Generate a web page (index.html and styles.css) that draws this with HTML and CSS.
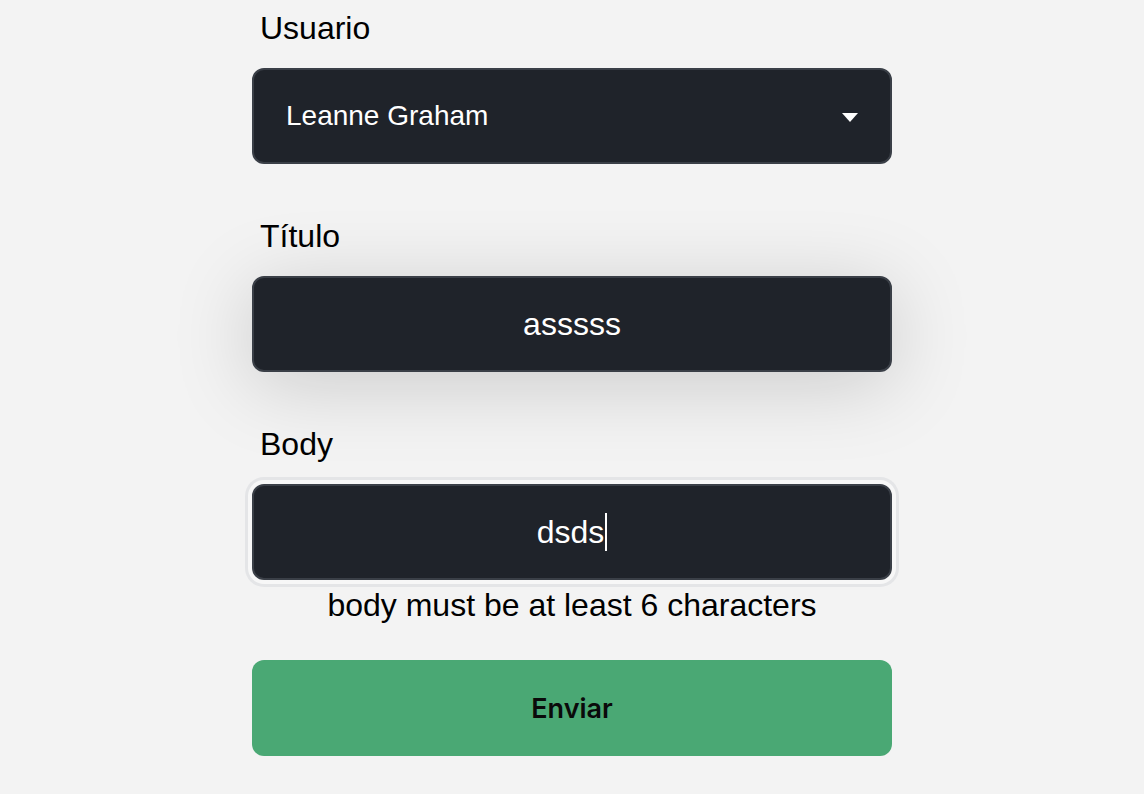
FILE: index.html
```html
<!DOCTYPE html>
<html lang="es">
<head>
<meta charset="utf-8">
<title>Formulario</title>
<link rel="stylesheet" href="styles.css">
</head>
<body>
<form class="form">
  <div class="field">
    <label class="label">Usuario</label>
    <div class="control select">
      <span>Leanne Graham</span>
      <svg class="arrow" width="16" height="9" viewBox="0 0 16 9"><path d="M0 0H16L8 9Z" fill="#fff"/></svg>
    </div>
  </div>
  <div class="field">
    <label class="label">Título</label>
    <div class="control text hovered">asssss</div>
  </div>
  <div class="field last">
    <label class="label">Body</label>
    <div class="control text focused">dsds<span class="caret"></span></div>
    <p class="error">body must be at least 6 characters</p>
  </div>
  <button type="button" class="submit">Enviar</button>
</form>
</body>
</html>
```

FILE: styles.css
```css
html, body {
  margin: 0;
  padding: 0;
}
body {
  background: #f3f3f3;
  font-family: "Liberation Sans", Arial, sans-serif;
  color: #000;
  min-height: 794px;
}
.form {
  width: 640px;
  margin: 0 auto;
  padding-top: 11px;
  display: flex;
  flex-direction: column;
}
.field {
  display: flex;
  flex-direction: column;
  margin-bottom: 55px;
}
.field.last {
  margin-bottom: 38px;
}
.label {
  font-size: 32px;
  line-height: 34px;
  padding-left: 8px;
  margin-bottom: 23px;
}
.control {
  box-sizing: border-box;
  height: 96px;
  border: 2px solid #3a3f47;
  border-radius: 12px;
  background: #1f232a;
  color: #fff;
  font-size: 28px;
  display: flex;
  align-items: center;
}
.select {
  justify-content: space-between;
  padding: 0 32px;
}
.arrow {
  margin-top: 2px;
}
.text {
  justify-content: center;
  font-size: 32px;
}
.hovered {
  box-shadow: 0 12px 80px rgba(0, 0, 0, 0.17);
}
.focused {
  box-shadow: 0 0 0 4px #f7f7f7, 0 0 0 7px #e4e5e7;
}
.caret {
  display: inline-block;
  width: 2px;
  height: 38px;
  background: #fff;
  margin-left: 1px;
}
.error {
  margin: 8px 0 0;
  text-align: center;
  font-size: 32px;
  line-height: 34px;
}
.submit {
  height: 96px;
  border: none;
  border-radius: 12px;
  background: #4aa874;
  color: #0a0a0a;
  font-family: Inter, "Noto Sans", sans-serif;
  font-weight: 600;
  font-size: 27px;
  cursor: pointer;
}
```
